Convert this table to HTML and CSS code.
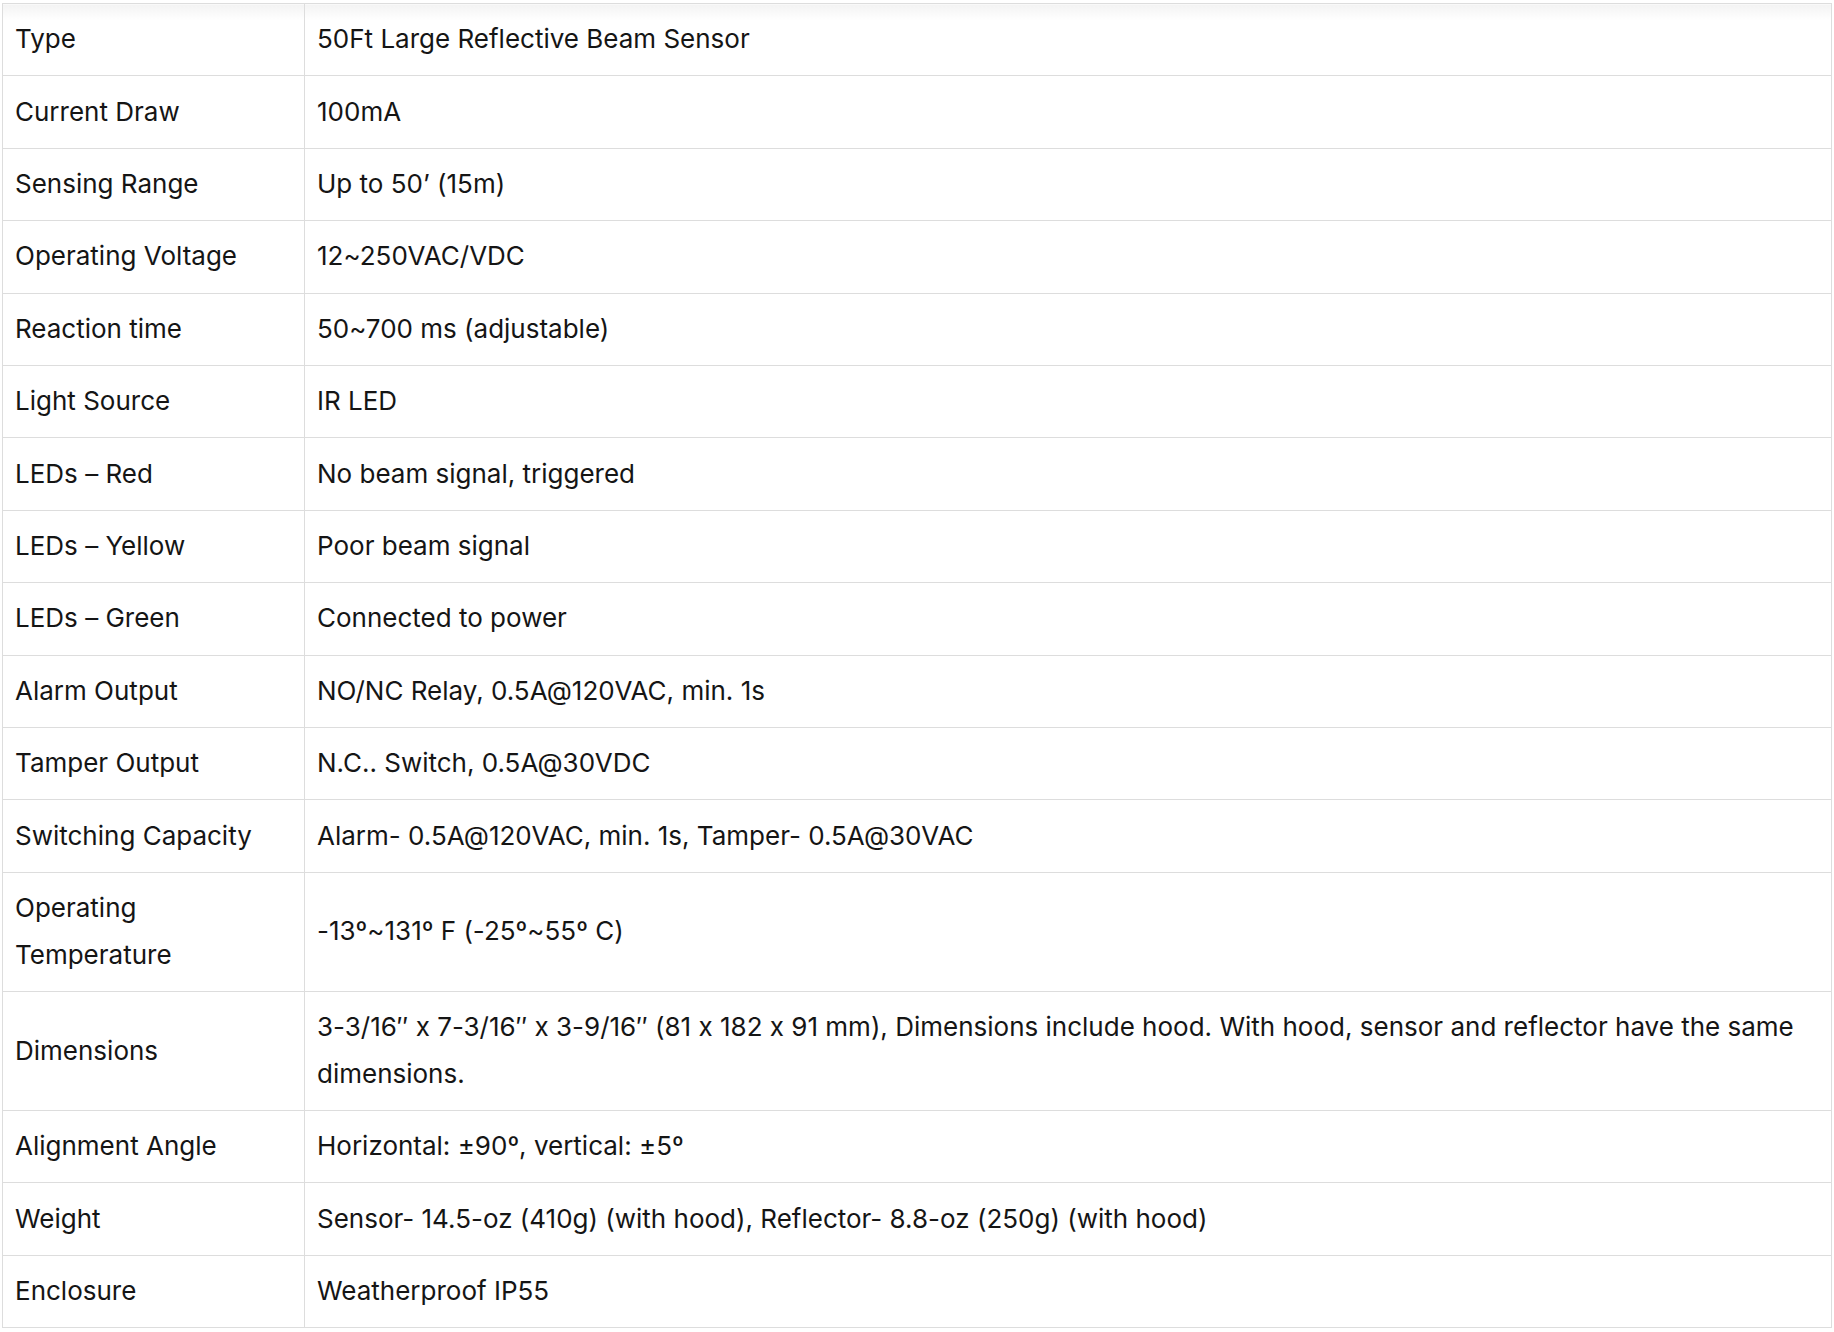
FILE: index.html
```html
<!DOCTYPE html>
<html lang="en">
<head>
<meta charset="utf-8">
<title>Specifications</title>
<link rel="stylesheet" href="styles.css">
</head>
<body>
<table class="specs">
  <colgroup><col class="col-label"><col class="col-value"></colgroup>
  <tbody>
    <tr class="first"><td>Type</td><td>50Ft Large Reflective Beam Sensor</td></tr>
    <tr><td>Current Draw</td><td>100mA</td></tr>
    <tr><td>Sensing Range</td><td>Up to 50’ (15m)</td></tr>
    <tr><td>Operating Voltage</td><td>12~250VAC/VDC</td></tr>
    <tr><td>Reaction time</td><td>50~700 ms (adjustable)</td></tr>
    <tr><td>Light Source</td><td>IR LED</td></tr>
    <tr><td>LEDs – Red</td><td>No beam signal, triggered</td></tr>
    <tr><td>LEDs – Yellow</td><td>Poor beam signal</td></tr>
    <tr><td>LEDs – Green</td><td>Connected to power</td></tr>
    <tr><td>Alarm Output</td><td>NO/NC Relay, 0.5A@120VAC, min. 1s</td></tr>
    <tr><td>Tamper Output</td><td>N.C.. Switch, 0.5A@30VDC</td></tr>
    <tr><td>Switching Capacity</td><td>Alarm- 0.5A@120VAC, min. 1s, Tamper- 0.5A@30VAC</td></tr>
    <tr><td>Operating Temperature</td><td>-13º~131º F (-25º~55º C)</td></tr>
    <tr><td>Dimensions</td><td>3-3/16″ x 7-3/16″ x 3-9/16″ (81 x 182 x 91 mm), Dimensions include hood. With hood, sensor and reflector have the same dimensions.</td></tr>
    <tr><td>Alignment Angle</td><td>Horizontal: ±90º, vertical: ±5º</td></tr>
    <tr><td>Weight</td><td>Sensor- 14.5-oz (410g) (with hood), Reflector- 8.8-oz (250g) (with hood)</td></tr>
    <tr><td>Enclosure</td><td>Weatherproof IP55</td></tr>
  </tbody>
</table>
</body>
</html>
```
FILE: styles.css
```css
html, body {
  margin: 0;
  padding: 0;
  background: #fff;
}
body {
  padding: 3px 2px 0 2px;
}
.specs {
  width: 1830px;
  border-collapse: collapse;
  table-layout: fixed;
  font-family: "Inter", "Noto Sans", sans-serif;
  font-size: 26px;
  line-height: 46.8px;
  color: #151515;
  font-feature-settings: "calt" 0;
}
.col-label {
  width: 302px;
}
.specs td {
  border: 1px solid #dddddd;
  padding: 12.3px 12px;
  vertical-align: middle;
  text-align: left;
}
.specs tr.first td {
  background: linear-gradient(#f3f3f3 0, #ffffff 16px);
}
```
